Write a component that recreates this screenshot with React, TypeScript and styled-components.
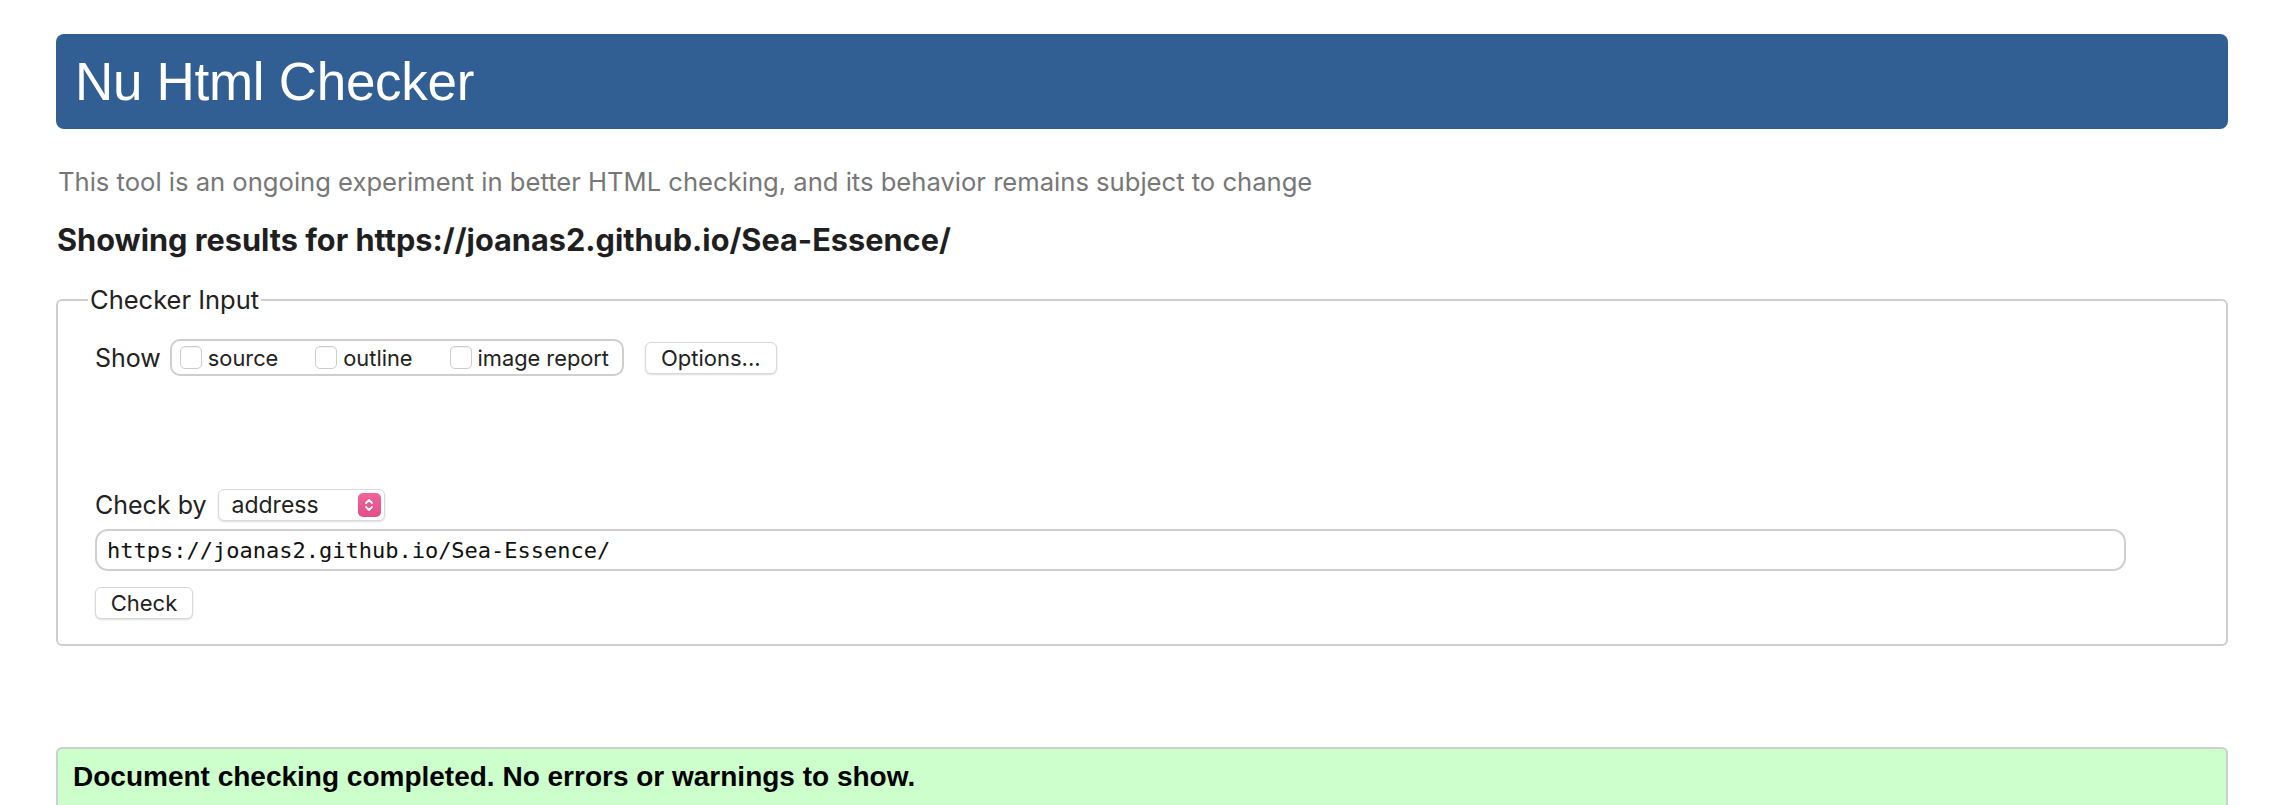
import React from "react";
import styled, { createGlobalStyle } from "styled-components";

const GlobalStyle = createGlobalStyle`
  html, body { margin: 0; padding: 0; background: #ffffff; }
  body { font-family: Inter, "Liberation Sans", sans-serif; color: #222222; }
`;

const Page = styled.div`
  padding: 34px 56px 0 56px;
`;

const Banner = styled.h1`
  margin: 0;
  height: 95px;
  display: flex;
  align-items: center;
  padding-left: 19px;
  background: #325f93;
  border-radius: 8px;
  color: #ffffff;
  font-family: "Liberation Sans", Arial, sans-serif;
  font-weight: 400;
  font-size: 53px;
  letter-spacing: -0.3px;
`;

const Intro = styled.p`
  margin: 37px 0 0 2px;
  font-size: 25.6px;
  line-height: 31px;
  color: #777777;
`;

const ResultsHeading = styled.h2`
  margin: 23px 0 0 1px;
  font-size: 30.7px;
  line-height: 39px;
  font-weight: 700;
  color: #1f1f22;
`;

const InputFieldset = styled.fieldset`
  margin: 26px 0 0 0;
  padding: 0;
  border: 2px solid #cfcfcf;
  border-radius: 6px;
  min-width: 0;
`;

const Legend = styled.legend`
  margin-left: 30px;
  padding: 0 2px;
  font-size: 25.5px;
  line-height: 30px;
  color: #222222;
`;

const FieldsetBody = styled.div`
  padding: 24px 36px 25px 37px;
`;

const Row = styled.div<{ $gapTop?: number }>`
  display: flex;
  align-items: center;
  margin-top: ${(p) => p.$gapTop ?? 0}px;
`;

const RowLabel = styled.span`
  font-size: 25px;
  color: #222222;
`;

const OptionGroup = styled.div`
  display: flex;
  align-items: center;
  height: 37px;
  box-sizing: border-box;
  margin-left: 9px;
  padding: 0 13px 0 8px;
  border: 2px solid #cfcfcf;
  border-radius: 10px;
`;

const Option = styled.label<{ $last?: boolean }>`
  display: flex;
  align-items: center;
  margin-right: ${(p) => (p.$last ? 0 : 37)}px;
  font-size: 21.8px;
  color: #222222;
`;

const CheckBox = styled.span`
  width: 22px;
  height: 23px;
  box-sizing: border-box;
  margin-right: 6px;
  border: 1px solid #cdcdcd;
  border-radius: 5px;
  background: #ffffff;
  box-shadow: inset 0 1px 1px rgba(0, 0, 0, 0.05);
`;

const PushButton = styled.button<{ $width?: number }>`
  height: 32px;
  ${(p) => (p.$width ? `width: ${p.$width}px;` : "padding: 0 15px;")}
  box-sizing: border-box;
  background: #ffffff;
  border: 1px solid #d9d9d9;
  border-radius: 6px;
  box-shadow: 0 1px 2px rgba(0, 0, 0, 0.14);
  font-family: Inter, "Liberation Sans", sans-serif;
  font-size: 22px;
  color: #222222;
  text-align: center;
`;

const OptionsButton = styled(PushButton)`
  margin-left: 21px;
`;

const SelectBox = styled.div`
  display: flex;
  align-items: center;
  justify-content: space-between;
  width: 167px;
  height: 32px;
  box-sizing: border-box;
  margin-left: 11px;
  padding: 0 3px 0 13px;
  background: #ffffff;
  border: 1px solid #dadada;
  border-radius: 6px;
  box-shadow: 0 1px 2px rgba(0, 0, 0, 0.14);
  font-size: 23px;
  color: #222222;
`;

const Stepper = styled.span`
  display: flex;
  align-items: center;
  justify-content: center;
  width: 23px;
  height: 24px;
  border-radius: 5px;
  background: linear-gradient(#f0649c, #e24f88);
`;

const UrlInput = styled.div`
  display: flex;
  align-items: center;
  width: calc(100% - 64px);
  height: 42px;
  box-sizing: border-box;
  margin-top: 8px;
  padding-left: 10px;
  border: 2px solid #cfcfcf;
  border-radius: 13px;
  font-family: "DejaVu Sans Mono", "Liberation Mono", monospace;
  font-size: 22px;
  color: #111111;
`;

const SubmitRow = styled.div`
  margin-top: 16px;
`;

const SuccessBox = styled.div`
  margin-top: 101px;
  padding: 12px 15px 20px 15px;
  background: #ccffcc;
  border: 2px solid #cfcfcf;
  border-radius: 6px;
  font-family: "Liberation Sans", Arial, sans-serif;
  font-weight: 700;
  font-size: 28px;
  color: #000000;
`;

const StepperIcon = () => (
  <svg width="12" height="18" viewBox="0 0 12 18" fill="none">
    <path d="M3 7 L6 4 L9 7" stroke="#ffffff" strokeWidth="1.8" strokeLinecap="round" strokeLinejoin="round" />
    <path d="M3 11 L6 14 L9 11" stroke="#ffffff" strokeWidth="1.8" strokeLinecap="round" strokeLinejoin="round" />
  </svg>
);

export default function App() {
  return (
    <>
      <GlobalStyle />
      <Page>
        <Banner>Nu Html Checker</Banner>
        <Intro>
          This tool is an ongoing experiment in better HTML checking, and its behavior remains subject to change
        </Intro>
        <ResultsHeading>Showing results for https://joanas2.github.io/Sea-Essence/</ResultsHeading>
        <InputFieldset>
          <Legend>Checker Input</Legend>
          <FieldsetBody>
            <Row>
              <RowLabel>Show</RowLabel>
              <OptionGroup>
                <Option>
                  <CheckBox />
                  source
                </Option>
                <Option>
                  <CheckBox />
                  outline
                </Option>
                <Option $last>
                  <CheckBox />
                  image report
                </Option>
              </OptionGroup>
              <OptionsButton>Options...</OptionsButton>
            </Row>
            <Row $gapTop={113}>
              <RowLabel>Check by</RowLabel>
              <SelectBox>
                address
                <Stepper>
                  <StepperIcon />
                </Stepper>
              </SelectBox>
            </Row>
            <UrlInput>https://joanas2.github.io/Sea-Essence/</UrlInput>
            <SubmitRow>
              <PushButton $width={98}>Check</PushButton>
            </SubmitRow>
          </FieldsetBody>
        </InputFieldset>
        <SuccessBox>Document checking completed. No errors or warnings to show.</SuccessBox>
      </Page>
    </>
  );
}
